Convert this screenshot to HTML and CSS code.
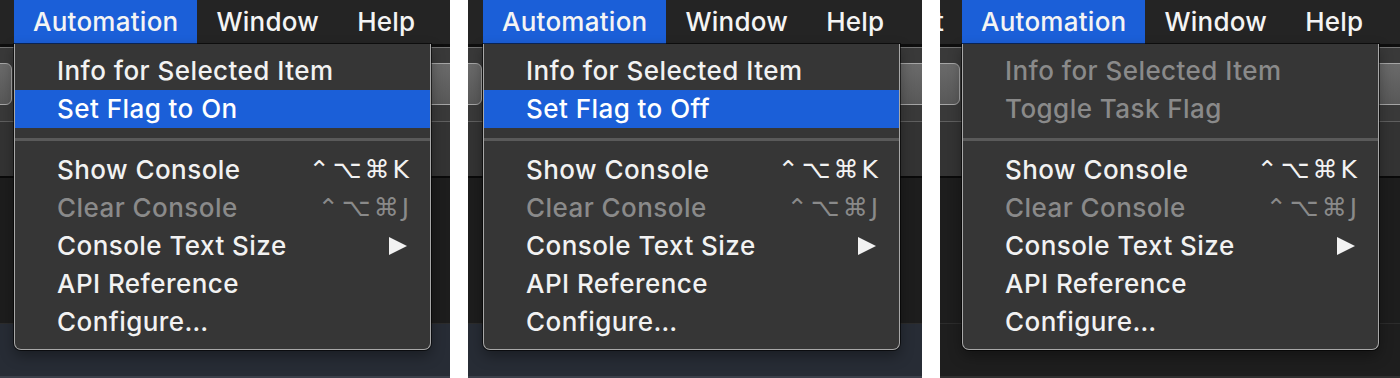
FILE: index.html
```html
<!DOCTYPE html>
<html lang="en">
<head>
<meta charset="utf-8">
<title>Automation menu</title>
<link rel="stylesheet" href="styles.css">
</head>
<body>
<div class="stage">
  <section class="panel p1">
    <div class="menubar">
      <span class="mb-item active">Automation</span>
      <span class="mb-item">Window</span>
      <span class="mb-item">Help</span>
    </div>
    <div class="bg-rule"></div>
    <div class="toolbar">
      <div class="tb-btn tb-left"></div>
      <div class="tb-btn tb-right"></div>
    </div>
    <div class="subbar"></div>
    <div class="content"></div>
    <div class="footer blue"></div>
    <div class="menu">
      <div class="row">Info for Selected Item</div>
      <div class="row selected">Set Flag to On</div>
      <div class="sep"></div>
      <div class="row"><span>Show Console</span><span class="keys"><i>⌃</i><i>⌥</i><i>⌘</i><i>K</i></span></div>
      <div class="row disabled"><span>Clear Console</span><span class="keys"><i>⌃</i><i>⌥</i><i>⌘</i><i>J</i></span></div>
      <div class="row"><span>Console Text Size</span><svg class="arrow" viewBox="0 0 18 18"><polygon points="0,0 18,9 0,18" fill="#f2f2f2"/></svg></div>
      <div class="row">API Reference</div>
      <div class="row">Configure…</div>
    </div>
  </section>

  <section class="panel p2">
    <div class="menubar">
      <span class="mb-item active">Automation</span>
      <span class="mb-item">Window</span>
      <span class="mb-item">Help</span>
    </div>
    <div class="bg-rule"></div>
    <div class="toolbar">
      <div class="tb-btn tb-left"></div>
      <div class="tb-btn tb-right"></div>
    </div>
    <div class="subbar"></div>
    <div class="content"></div>
    <div class="footer blue"></div>
    <div class="menu">
      <div class="row">Info for Selected Item</div>
      <div class="row selected">Set Flag to Off</div>
      <div class="sep"></div>
      <div class="row"><span>Show Console</span><span class="keys"><i>⌃</i><i>⌥</i><i>⌘</i><i>K</i></span></div>
      <div class="row disabled"><span>Clear Console</span><span class="keys"><i>⌃</i><i>⌥</i><i>⌘</i><i>J</i></span></div>
      <div class="row"><span>Console Text Size</span><svg class="arrow" viewBox="0 0 18 18"><polygon points="0,0 18,9 0,18" fill="#f2f2f2"/></svg></div>
      <div class="row">API Reference</div>
      <div class="row">Configure…</div>
    </div>
  </section>

  <section class="panel p3">
    <div class="menubar">
      <span class="mb-item stub">t</span>
      <span class="mb-item active">Automation</span>
      <span class="mb-item">Window</span>
      <span class="mb-item">Help</span>
    </div>
    <div class="bg-rule"></div>
    <div class="toolbar">
      <div class="tb-btn tb-left"></div>
      <div class="tb-btn tb-right"></div>
    </div>
    <div class="subbar"></div>
    <div class="content"></div>
    <div class="footer dark"></div>
    <div class="menu">
      <div class="row disabled">Info for Selected Item</div>
      <div class="row disabled">Toggle Task Flag</div>
      <div class="sep"></div>
      <div class="row"><span>Show Console</span><span class="keys"><i>⌃</i><i>⌥</i><i>⌘</i><i>K</i></span></div>
      <div class="row disabled"><span>Clear Console</span><span class="keys"><i>⌃</i><i>⌥</i><i>⌘</i><i>J</i></span></div>
      <div class="row"><span>Console Text Size</span><svg class="arrow" viewBox="0 0 18 18"><polygon points="0,0 18,9 0,18" fill="#f2f2f2"/></svg></div>
      <div class="row">API Reference</div>
      <div class="row">Configure…</div>
    </div>
  </section>
</div>
</body>
</html>
```

FILE: styles.css
```css
html, body {
  margin: 0;
  padding: 0;
  background: #ffffff;
}

.stage {
  display: flex;
  gap: 18px;
  width: 1400px;
  height: 378px;
  font-family: "Inter", "Roboto", "DejaVu Sans", sans-serif;
}

.panel {
  position: relative;
  height: 378px;
  overflow: hidden;
  display: flex;
  flex-direction: column;
  background: #1e1e1e;
}
.p1 { width: 450px; }
.p2 { width: 454px; }
.p3 { width: 460px; }

/* ---------- menu bar ---------- */
.menubar {
  height: 44px;
  flex: none;
  display: flex;
  align-items: center;
  background: #242424;
  color: #f4f4f4;
  font-size: 26px;
  font-weight: 500;
  letter-spacing: 0.25px;
}
.p1 .menubar { padding-left: 14px; }
.p2 .menubar { padding-left: 15px; }
.p3 .menubar { padding-left: 0; }

.mb-item {
  height: 44px;
  line-height: 43px;
  padding: 0 19px;
  white-space: nowrap;
}
.mb-item.active { background: #1b5fd8; }
.mb-item.stub {
  box-sizing: border-box;
  width: 30px;
  margin-left: -8px;
  padding: 0 18px 0 0;
  text-align: right;
}

/* ---------- background window chrome ---------- */
.bg-rule {
  height: 3px;
  flex: none;
  background: #0e0e0e;
  border-bottom: 1px solid #727272;
}
.toolbar {
  height: 73px;
  flex: none;
  display: flex;
  justify-content: space-between;
  align-items: flex-start;
  background: #393939;
  border-bottom: 1px solid #5f5f5f;
}
.tb-btn {
  height: 42px;
  margin-top: 15px;
  box-sizing: border-box;
  border: 1px solid #a5a5a5;
  border-radius: 6px;
  background: linear-gradient(180deg, #6a6a6a, #585858);
}
.tb-left { margin-left: -12px; }
.p1 .tb-left { width: 24px; }
.p2 .tb-left { width: 26px; }
.p3 .tb-left { width: 32px; }
.tb-right { width: 60px; margin-right: -30px; }

.subbar {
  height: 54px;
  flex: none;
  background: #333333;
  border-bottom: 2px solid #0a0a0a;
}
.content {
  height: 145px;
  flex: none;
  background: #1d1d1d;
}
.footer {
  flex: 1;
  border-top: 1px solid #2c2c2c;
  border-bottom: 2px solid #3b404a;
}
.footer.blue { background: #272c35; }
.footer.dark { background: #1e1e1e; border-bottom-color: #303030; }

/* ---------- dropdown menu ---------- */
.menu {
  position: absolute;
  top: 44px;
  width: 417px;
  box-sizing: border-box;
  padding: 8px 0 8px;
  background: #363636;
  border: 1px solid #a8a8a8;
  border-top: none;
  border-radius: 0 0 7px 7px;
  box-shadow: 0 0 0 1px rgba(0, 0, 0, 0.6), 0 6px 14px rgba(0, 0, 0, 0.35);
  color: #f2f2f2;
  font-size: 26px;
  font-weight: 500;
  letter-spacing: 0.45px;
}
.p1 .menu { left: 14px; }
.p2 .menu { left: 15px; }
.p3 .menu { left: 22px; }

.row {
  height: 38px;
  line-height: 36px;
  display: flex;
  align-items: center;
  justify-content: space-between;
  padding: 0 21px 0 42px;
  white-space: nowrap;
}
.row.selected { background: #1b5fd8; color: #ffffff; }
.row.disabled { color: #8a8a8a; }

.sep {
  height: 3px;
  margin: 10px 0 10px;
  background: #5a5a5a;
}

.keys {
  display: flex;
  align-items: center;
  gap: 3px;
  font-family: "DejaVu Sans", sans-serif;
  font-size: 25px;
  font-weight: 400;
  letter-spacing: 0;
}
.keys i {
  font-style: normal;
}

.arrow {
  width: 18px;
  height: 18px;
  margin-right: 2px;
}
```
